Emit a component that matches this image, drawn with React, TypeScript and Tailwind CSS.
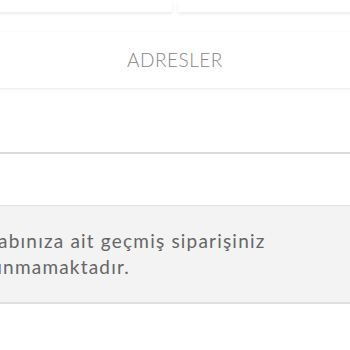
export default function App() {
  return (
    <div className="w-[350px] h-[350px] overflow-hidden bg-white" style={{ fontFamily: 'Lato, "Noto Sans", sans-serif' }}>
      <div className="flex gap-[6px] -mx-[20px] h-[12px]">
        <div className="flex-1 bg-white shadow-[0_2px_3px_rgba(0,0,0,0.08)]" />
        <div className="flex-1 bg-white shadow-[0_2px_3px_rgba(0,0,0,0.08)]" />
      </div>

      <div className="mt-[20px] -mx-[20px] h-[56px] bg-white flex items-center justify-center shadow-[0_1px_3px_rgba(0,0,0,0.09)]">
        <span className="text-[19px] text-[#878787] tracking-[0.5px] font-light">ADRESLER</span>
      </div>

      <div className="mt-[64px] h-[2px] bg-[#dadada]" />

      <div className="mt-[51px] border-t border-b-2 border-[#e0e0e0] bg-[#f3f3f3] h-[99px] -ml-[38px] pt-[22px]">
        <p className="text-[19px] leading-[26px] text-[#666666] tracking-[1.2px] w-[340px]">
          Hesabınıza ait geçmiş siparişiniz bulunmamaktadır.
        </p>
      </div>
    </div>
  );
}
